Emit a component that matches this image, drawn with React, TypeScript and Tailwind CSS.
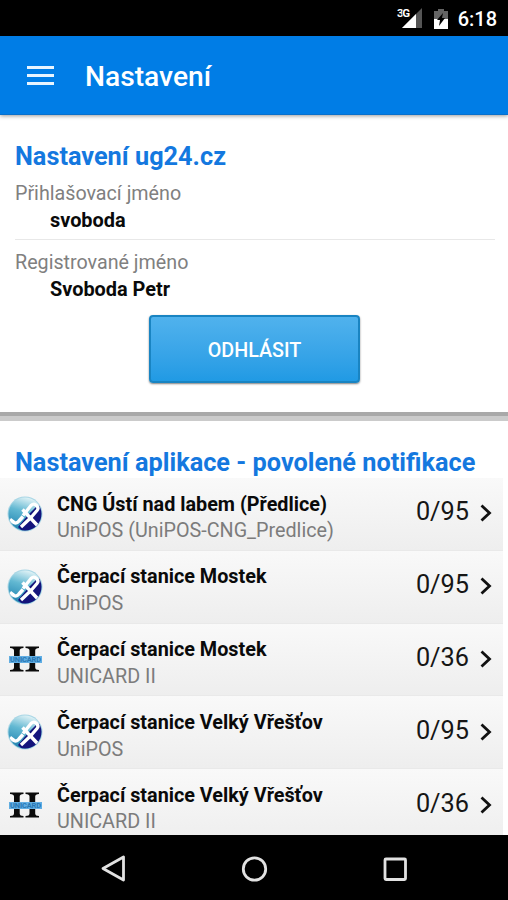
type RowData = { title: string; sub: string; count: string; kind: 'pos' | 'card' };

const rows: RowData[] = [
  { title: 'CNG Ústí nad labem (Předlice)', sub: 'UniPOS (UniPOS-CNG_Predlice)', count: '0/95', kind: 'pos' },
  { title: 'Čerpací stanice Mostek', sub: 'UniPOS', count: '0/95', kind: 'pos' },
  { title: 'Čerpací stanice Mostek', sub: 'UNICARD II', count: '0/36', kind: 'card' },
  { title: 'Čerpací stanice Velký Vřešťov', sub: 'UniPOS', count: '0/95', kind: 'pos' },
  { title: 'Čerpací stanice Velký Vřešťov', sub: 'UNICARD II', count: '0/36', kind: 'card' },
];

function PosLogo() {
  return (
    <svg width="36" height="36" viewBox="0 0 36 36" className="block">
      <defs>
        <linearGradient id="globe" x1="0.5" y1="0" x2="0.2" y2="1">
          <stop offset="0" stopColor="#d9eff4" />
          <stop offset="0.4" stopColor="#62b8d2" />
          <stop offset="1" stopColor="#1c7fae" />
        </linearGradient>
        <clipPath id="disc"><circle cx="18" cy="18" r="16.500" /></clipPath>
      </defs>
      <circle cx="18" cy="18" r="17.500" fill="#a9d6e5" />
      <circle cx="18" cy="18" r="16.500" fill="url(#globe)" />
      <g clipPath="url(#disc)">
        <path d="M36 9L30 10L22 18L11 31L16 36H36Z" fill="#14147c" />
        <path d="M3 23.500L7 26.500Q9.500 28 12 25L16 20.500M15.500 13.500L22.500 21" fill="none" stroke="#fff" strokeWidth="3.500" />
        <path d="M16 19.500L24 9.500Q26.500 7 29 9L30 10Q32 12 30 14.500L24 21.500L14 31" fill="none" stroke="#fff" strokeWidth="3.300" strokeLinejoin="round" />
        <path d="M22 20.500L30.500 29.500" fill="none" stroke="#fff" strokeWidth="3.500" />
      </g>
    </svg>
  );
}

function CardLogo() {
  return (
    <svg width="36" height="36" viewBox="0 0 36 36" className="block">
      <path d="M3 5.500H16.500V7Q12.700 7 12.700 9.500V26.500Q12.700 29 16.500 29V30.500H3V29Q7 29 7 26.500V9.500Q7 7 3 7ZM18.500 5.500H32V7Q28.200 7 28.200 9.500V26.500Q28.200 29 32 29V30.500H18.500V29Q22.500 29 22.500 26.500V9.500Q22.500 7 18.500 7Z" fill="#0b0b0b" />
      <rect x="2" y="15" width="33" height="7" fill="#62aee3" />
      <text x="3" y="21.200" textLength="31" fontSize="7.500" fontWeight="700" fill="#2877b3">UNICARD</text>
    </svg>
  );
}

function Row({ title, sub, count, kind }: RowData) {
  return (
    <div className="flex h-[72.8px] w-[503px] shrink-0 items-center border-b border-[#e9e9e9] bg-linear-to-b from-[#f9f9f9] to-[#eeeeee] pl-[7px] pr-[11px]">
      <div className="w-[50px]">{kind === 'pos' ? <PosLogo /> : <CardLogo />}</div>
      <div className="min-w-0 flex-1 pt-[8px] whitespace-nowrap">
        <div className="h-[26.500px] text-[19.800px] leading-[26px] font-bold text-[#0a0a0a]">{title}</div>
        <div className="h-[26px] text-[19.750px] leading-[26px] text-[#7c7c7c]">{sub}</div>
      </div>
      <span className="-mt-[3px] text-[25.300px] leading-[30px] text-[#161616]">{count}</span>
      <svg width="12" height="20" viewBox="0 0 12 20" className="ml-[11px] -mt-px" fill="none" stroke="#111" strokeWidth="2.800">
        <path d="M1.500 2.500L9.500 10L1.500 17.500" />
      </svg>
    </div>
  );
}

export default function App() {
  return (
    <div className="flex h-[900px] w-[508px] flex-col overflow-hidden bg-white font-[Roboto,sans-serif]">
      <div className="flex h-9 shrink-0 items-center justify-end bg-black pr-[11px] text-white">
        <svg width="30" height="28" viewBox="0 0 30 28" className="mr-px">
          <path d="M7 24L27 4V24Z" fill="#555" />
          <path d="M7 24L21 10V24Z" fill="#fff" />
          <text x="2" y="13" fontSize="11.500" fontWeight="700" fill="#fff" stroke="#000" strokeWidth="1.500" paintOrder="stroke" textLength="13">3G</text>
        </svg>
        <svg width="16" height="22" viewBox="0 0 16 22" className="mt-px ml-[7px]">
          <path d="M1 3H5V1H11V3H15V21H1Z" fill="#646464" />
          <path d="M1 11H15V21H1Z" fill="#fff" />
          <path d="M10 5L4 12H7L6 18L12 10H9Z" fill="#000" />
        </svg>
        <span className="mt-[2px] ml-[9px] text-[20px] font-medium">6:18</span>
      </div>
      <div className="z-10 flex h-[79px] shrink-0 items-center border-b border-[#0870cc] bg-[#007de6] pl-[27px] shadow-[0_1px_4px_rgba(0,0,0,0.4)]">
        <div className="flex w-[58px] flex-col gap-[5px]">
          <div className="h-[3px] w-[27px] bg-[#e8f5ff]" />
          <div className="h-[3px] w-[27px] bg-[#e8f5ff]" />
          <div className="h-[3px] w-[27px] bg-[#e8f5ff]" />
        </div>
        <h1 className="mt-[3px] text-[28.200px] leading-[36px] font-medium text-white">Nastavení</h1>
      </div>
      <section className="flex h-[297px] shrink-0 flex-col pt-[26px] pr-[13px] pl-[15px]">
        <h2 className="h-[39px] text-[25.300px] leading-[32px] font-bold text-[#1478df]">Nastavení ug24.cz</h2>
        <div className="h-[27px] text-[19.700px] leading-[27px] text-[#808080]">Přihlašovací jméno</div>
        <div className="h-[33px] border-b border-[#e8e8e8] pl-[35px] text-[19.900px] leading-[27px] font-bold text-[#0a0a0a]">svoboda</div>
        <div className="mt-[9px] h-[27px] text-[19.700px] leading-[27px] text-[#808080]">Registrované jméno</div>
        <div className="h-[27px] pl-[35px] text-[19.900px] leading-[27px] font-bold text-[#0a0a0a]">Svoboda Petr</div>
        <button className="mt-[12px] ml-[134px] h-[68px] w-[211px] rounded-[4px] border-2 border-[#1984c2] bg-linear-to-b from-[#50b2ed] to-[#209ae4] pt-[3px] text-[19.700px] font-medium text-white shadow-[0_1px_2px_rgba(0,0,0,0.5)]">ODHLÁSIT</button>
      </section>
      <div className="h-[9px] shrink-0 border-t-4 border-[#a9a9a9] bg-[#cbcbcb]" />
      <section className="flex min-h-0 flex-1 flex-col overflow-hidden">
        <h2 className="h-[57px] shrink-0 pt-[26px] pl-[15px] text-[25.300px] leading-[32px] font-bold whitespace-nowrap text-[#1478df]">Nastavení aplikace - povolené notifikace</h2>
        {rows.map((row, i) => <Row key={i} {...row} />)}
      </section>
      <nav className="flex h-[65px] shrink-0 items-center bg-black pt-[2px] pl-[100px]">
        <svg width="28" height="30" viewBox="0 0 28 30" fill="none" stroke="#e2e2e2" strokeWidth="2.800"><path d="M3 14.500L23.500 3V26Z" strokeLinejoin="round" /></svg>
        <svg width="28" height="28" viewBox="0 0 28 28" className="ml-[113px]" fill="none" stroke="#e2e2e2" strokeWidth="2.800"><circle cx="13.500" cy="14" r="11.200" /></svg>
        <svg width="28" height="28" viewBox="0 0 28 28" className="ml-[112px]" fill="none" stroke="#e2e2e2" strokeWidth="2.800"><rect x="4" y="4" width="20.500" height="20.500" rx="1" /></svg>
      </nav>
    </div>
  );
}
